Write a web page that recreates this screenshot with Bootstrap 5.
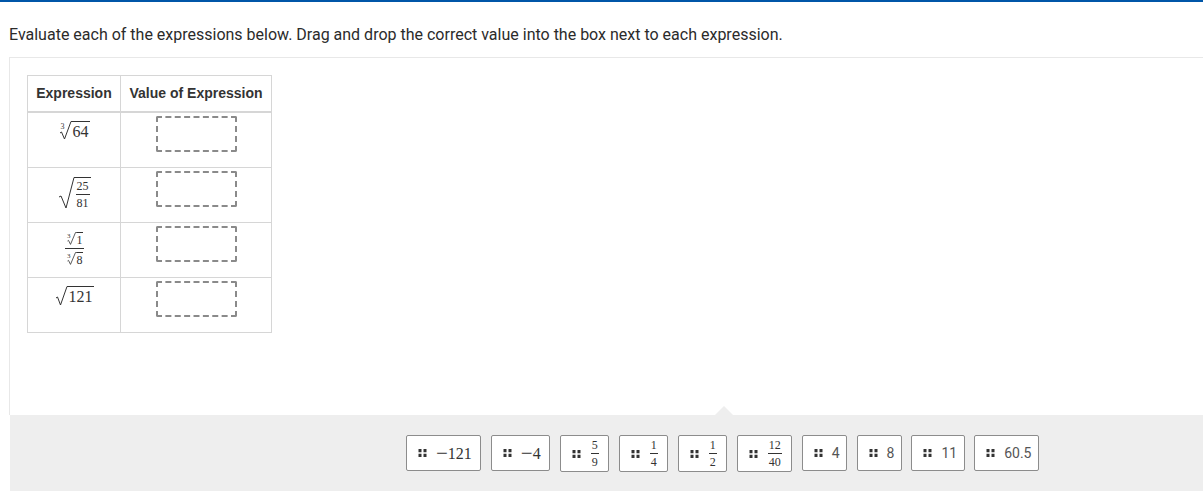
<!DOCTYPE html>
<html lang="en">
<head>
  <meta charset="UTF-8" />
  <meta name="viewport" content="width=device-width, initial-scale=1" />
  <title>Evaluate expressions</title>
  <link href="https://cdn.jsdelivr.net/npm/bootstrap@5.3.0/dist/css/bootstrap.min.css" rel="stylesheet">
  <style>
    html, body { height: 491px; overflow: hidden; }
    body { font-family: Roboto, sans-serif; color: #333; background: #fff; }
    .top-rule { height: 2px; background: #0056a8; }
    .prompt { font-size: 16px; line-height: 24px; padding: 21px 9px 10px; color: #2b2b2b; margin: 0; }
    .work-area { height: 358px; margin-left: 9px; border-left: 1px solid #e8e8e8; border-top: 1px solid #e8e8e8; }
    .table-wrap { padding: 17px 17px 0; }

    .expr-table { width: 245px; border-collapse: collapse; table-layout: fixed; margin: 0; }
    .expr-table th, .expr-table td { border: 1px solid #d6d6d6; padding: 0; text-align: center; }
    .expr-table th { height: 36px; font: bold 14px/20px "Liberation Sans", sans-serif; color: #333; border-bottom: 2px solid #d6d6d6; }
    .expr-table td { height: 55px; vertical-align: top; }
    .expr-table tbody tr:first-child td { height: 56px; }
    .first-col { width: 93px; }

    .drop-box { width: 81px; height: 36px; margin: 3px auto 0; border: 2px dashed #8a8a8a; border-radius: 2px; }

    .math { font-family: "Liberation Serif", serif; color: #333; }
    .cell-math { padding-top: 5px; font-size: 16px; line-height: 24px; }
    .cell-math.low { padding-top: 9px; }
    .radical { display: inline-flex; align-items: stretch; vertical-align: middle; }
    .radical svg { display: block; flex: none; }
    .radicand { border-top: 1px solid #333; line-height: 1; padding: 2px 1px 0; }
    .radicand-sm { padding: 1px 0 0; font-size: 12px; }
    .frac { display: inline-flex; flex-direction: column; align-items: center; vertical-align: middle; line-height: 1; }
    .frac > span:first-child { border-bottom: 1px solid #333; padding: 0 1px 2px; align-self: stretch; text-align: center; }
    .frac > span:last-child { padding-top: 2px; }
    .frac-sm { font-size: 12px; }

    .tray { position: absolute; left: 10px; right: 0; top: 415px; height: 76px; background: #eee; padding: 20px 0 0 396px; }
    .tray-notch { position: absolute; left: 705px; top: -9px; width: 0; height: 0; border-left: 9px solid transparent; border-right: 9px solid transparent; border-bottom: 9px solid #eee; }
    .tile-row { gap: 9.5px; }
    .tile { height: 36px; border: 1px solid #8c8c8c; border-radius: 2px; background: #fff; padding: 0 6.5px 0 11px; gap: 9px; font-size: 14px; color: #555; }
    .tile.neg { padding-right: 8.5px; }
    .tile.tall { height: 37px; padding-right: 9.5px; gap: 10px; }
    .neg .math { font-size: 16px; line-height: 20px; }
    .minus { font-size: 21px; line-height: 1; vertical-align: -1px; }
    .grip { width: 9px; height: 8px; flex: none; }
  </style>
</head>
<body>
  <div class="top-rule"></div>
  <p class="prompt">Evaluate each of the expressions below. Drag and drop the correct value into the box next to each expression.</p>

  <div class="work-area">
    <div class="table-wrap">
      <table class="expr-table">
        <thead>
          <tr><th class="first-col">Expression</th><th>Value of Expression</th></tr>
        </thead>
        <tbody>
          <tr>
            <td><div class="math cell-math">
              <span class="radical">
                <svg width="13" height="19" viewBox="0 0 13 19"><path d="M1 12l1.5-1 3 7L12 .5h1" fill="none" stroke="#333"/><text x="1.5" y="8" font-size="8" font-family="Liberation Serif" fill="#333">3</text></svg>
                <span class="radicand">64</span>
              </span>
            </div></td>
            <td><div class="drop-box"></div></td>
          </tr>
          <tr>
            <td><div class="math cell-math low">
              <span class="radical">
                <svg width="17" height="32" viewBox="0 0 17 32"><path d="M1 20l2-1 5 12L16 .5h1" fill="none" stroke="#333"/></svg>
                <span class="radicand"><span class="frac frac-sm"><span>25</span><span>81</span></span></span>
              </span>
            </div></td>
            <td><div class="drop-box"></div></td>
          </tr>
          <tr>
            <td><div class="math cell-math low">
              <span class="frac frac-sm">
                <span>
                  <span class="radical"><svg width="11" height="13" viewBox="0 0 11 13"><path d="M1.5 9l1-.6 2 4L9.5 .5H11" fill="none" stroke="#333" stroke-width=".8"/><text x="1" y="6" font-size="7" font-family="Liberation Serif" fill="#333">3</text></svg><span class="radicand radicand-sm">1</span></span>
                </span>
                <span>
                  <span class="radical"><svg width="11" height="13" viewBox="0 0 11 13"><path d="M1.5 9l1-.6 2 4L9.5 .5H11" fill="none" stroke="#333" stroke-width=".8"/><text x="1" y="6" font-size="7" font-family="Liberation Serif" fill="#333">3</text></svg><span class="radicand radicand-sm">8</span></span>
                </span>
              </span>
            </div></td>
            <td><div class="drop-box"></div></td>
          </tr>
          <tr>
            <td><div class="math cell-math">
              <span class="radical">
                <svg width="13" height="20" viewBox="0 0 13 20"><path d="M1 12l1.5-1 3 8L12 .5h1" fill="none" stroke="#333"/></svg>
                <span class="radicand">121</span>
              </span>
            </div></td>
            <td><div class="drop-box"></div></td>
          </tr>
        </tbody>
      </table>
    </div>
  </div>

  <div class="tray">
    <div class="tray-notch"></div>
    <div class="d-flex align-items-start tile-row">
      <div class="tile neg d-flex align-items-center"><svg class="grip" viewBox="0 0 9 8"><path fill="#333" d="M.5 0h3v3.2h-3zM5.5 0h3v3.2h-3zM.5 4.8h3V8h-3zM5.5 4.8h3V8h-3z"/></svg><span class="math"><span class="minus">−</span>121</span></div>
      <div class="tile neg d-flex align-items-center"><svg class="grip" viewBox="0 0 9 8"><path fill="#333" d="M.5 0h3v3.2h-3zM5.5 0h3v3.2h-3zM.5 4.8h3V8h-3zM5.5 4.8h3V8h-3z"/></svg><span class="math"><span class="minus">−</span>4</span></div>
      <div class="tile tall d-flex align-items-center"><svg class="grip" viewBox="0 0 9 8"><path fill="#333" d="M.5 0h3v3.2h-3zM5.5 0h3v3.2h-3zM.5 4.8h3V8h-3zM5.5 4.8h3V8h-3z"/></svg><span class="math frac frac-sm"><span>5</span><span>9</span></span></div>
      <div class="tile tall d-flex align-items-center"><svg class="grip" viewBox="0 0 9 8"><path fill="#333" d="M.5 0h3v3.2h-3zM5.5 0h3v3.2h-3zM.5 4.8h3V8h-3zM5.5 4.8h3V8h-3z"/></svg><span class="math frac frac-sm"><span>1</span><span>4</span></span></div>
      <div class="tile tall d-flex align-items-center"><svg class="grip" viewBox="0 0 9 8"><path fill="#333" d="M.5 0h3v3.2h-3zM5.5 0h3v3.2h-3zM.5 4.8h3V8h-3zM5.5 4.8h3V8h-3z"/></svg><span class="math frac frac-sm"><span>1</span><span>2</span></span></div>
      <div class="tile tall d-flex align-items-center"><svg class="grip" viewBox="0 0 9 8"><path fill="#333" d="M.5 0h3v3.2h-3zM5.5 0h3v3.2h-3zM.5 4.8h3V8h-3zM5.5 4.8h3V8h-3z"/></svg><span class="math frac frac-sm"><span>12</span><span>40</span></span></div>
      <div class="tile d-flex align-items-center"><svg class="grip" viewBox="0 0 9 8"><path fill="#333" d="M.5 0h3v3.2h-3zM5.5 0h3v3.2h-3zM.5 4.8h3V8h-3zM5.5 4.8h3V8h-3z"/></svg><span>4</span></div>
      <div class="tile d-flex align-items-center"><svg class="grip" viewBox="0 0 9 8"><path fill="#333" d="M.5 0h3v3.2h-3zM5.5 0h3v3.2h-3zM.5 4.8h3V8h-3zM5.5 4.8h3V8h-3z"/></svg><span>8</span></div>
      <div class="tile d-flex align-items-center"><svg class="grip" viewBox="0 0 9 8"><path fill="#333" d="M.5 0h3v3.2h-3zM5.5 0h3v3.2h-3zM.5 4.8h3V8h-3zM5.5 4.8h3V8h-3z"/></svg><span>11</span></div>
      <div class="tile d-flex align-items-center"><svg class="grip" viewBox="0 0 9 8"><path fill="#333" d="M.5 0h3v3.2h-3zM5.5 0h3v3.2h-3zM.5 4.8h3V8h-3zM5.5 4.8h3V8h-3z"/></svg><span>60.5</span></div>
    </div>
  </div>

  <script src="https://cdn.jsdelivr.net/npm/bootstrap@5.3.0/dist/js/bootstrap.bundle.min.js"></script>
</body>
</html>
